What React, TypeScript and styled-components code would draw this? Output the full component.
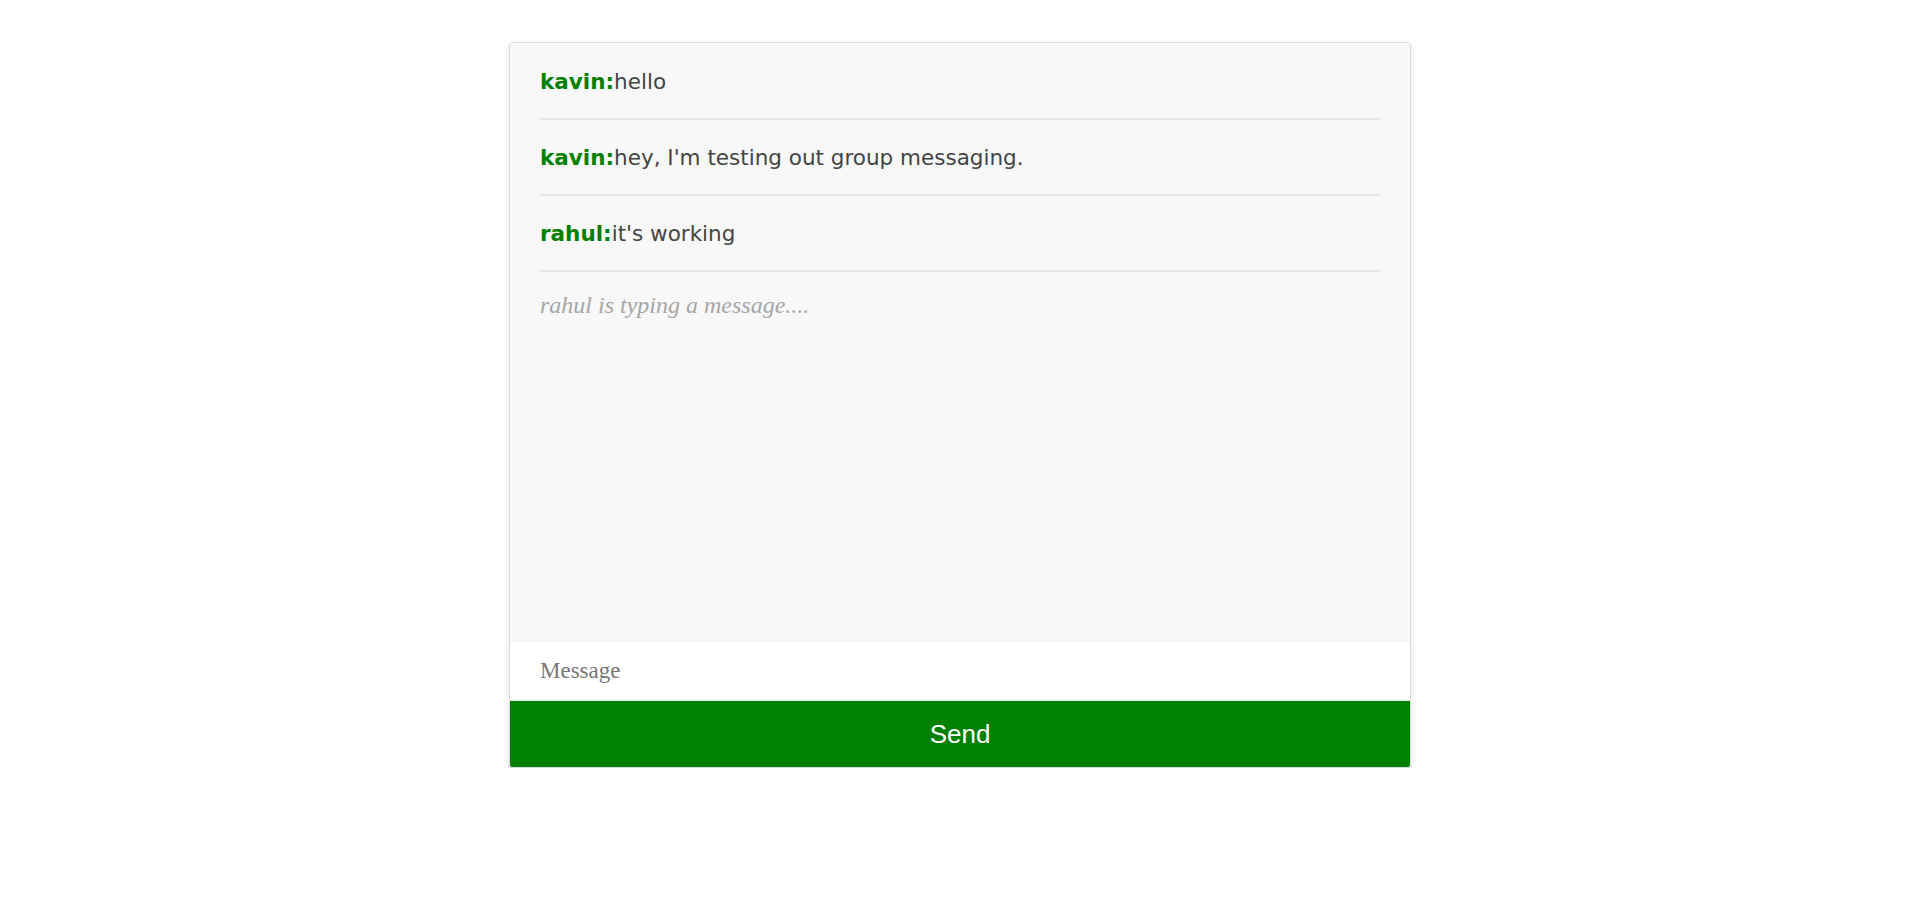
import React from "react";
import styled, { createGlobalStyle } from "styled-components";

const GlobalStyle = createGlobalStyle`
  html, body {
    margin: 0;
    padding: 0;
    background: #ffffff;
  }
`;

type Message = { user: string; text: string };

const messages: Message[] = [
  { user: "kavin", text: "hello" },
  { user: "kavin", text: "hey, I'm testing out group messaging." },
  { user: "rahul", text: "it's working" },
];

export default function App() {
  return (
    <>
      <GlobalStyle />
      <ChatWindow>
        <MessageArea>
          <MessageList>
            {messages.map((m, i) => (
              <MessageItem key={i}>
                <UserName>{m.user}:</UserName>
                {m.text}
              </MessageItem>
            ))}
          </MessageList>
          <Typing>{"rahul is typing a message...."}</Typing>
        </MessageArea>
        <MessageInput placeholder="Message" />
        <SendButton>Send</SendButton>
      </ChatWindow>
    </>
  );
}

const ChatWindow = styled.div`
  width: 900px;
  margin: 42px auto 0;
  border: 1px solid #dcdcdc;
  border-radius: 3px;
  box-shadow: 0 3px 6px rgba(0, 0, 0, 0.12);
  background: #ffffff;
  display: flex;
  flex-direction: column;
  overflow: hidden;
`;

const MessageArea = styled.div`
  height: 600px;
  box-sizing: border-box;
  padding: 1px 30px 0;
  background: #f8f8f8;
`;

const MessageList = styled.ul`
  list-style: none;
  margin: 0;
  padding: 0;
`;

const MessageItem = styled.li`
  font-family: "Comic Sans MS", "DejaVu Sans", sans-serif;
  font-size: 21.5px;
  line-height: 30px;
  color: #444444;
  padding: 23px 0 21px;
  border-bottom: 2px solid #e6e6e6;
  white-space: nowrap;
`;

const UserName = styled.span`
  color: #008000;
  font-weight: 700;
`;

const Typing = styled.p`
  margin: 0;
  padding: 18px 0;
  font-family: "Liberation Serif", "Times New Roman", serif;
  font-style: italic;
  font-size: 24px;
  line-height: 30px;
  color: #a6a6a6;
`;

const MessageInput = styled.input`
  height: 58px;
  box-sizing: border-box;
  border: none;
  border-bottom: 2px solid #eeeeee;
  outline: none;
  padding: 0 30px;
  background: #ffffff;
  font-family: "Liberation Serif", "Times New Roman", serif;
  font-size: 23px;
  color: #333333;

  &::placeholder {
    color: #777777;
  }
`;

const SendButton = styled.button`
  height: 66px;
  border: none;
  margin: 0;
  background: #008000;
  color: #ffffff;
  font-family: "Liberation Sans", Arial, sans-serif;
  font-size: 26px;
  cursor: pointer;
`;
